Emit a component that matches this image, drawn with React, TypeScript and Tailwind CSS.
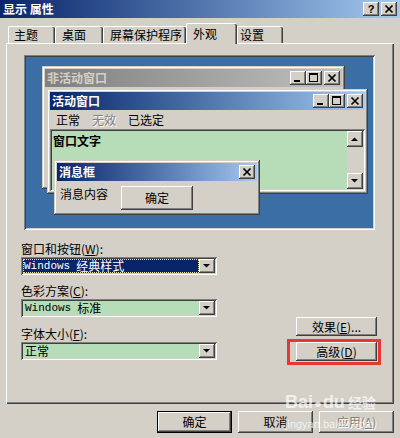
const raised =
    "shadow-[inset_-1px_-1px_#404040,inset_1px_1px_#ffffff,inset_-2px_-2px_#808080,inset_2px_2px_#d4d0c8]";
const sunken =
    "shadow-[inset_1px_1px_#808080,inset_-1px_-1px_#ffffff,inset_2px_2px_#404040,inset_-2px_-2px_#d4d0c8]";
const frame =
    "shadow-[inset_-1px_-1px_#404040,inset_1px_1px_#d4d0c8,inset_-2px_-2px_#808080,inset_2px_2px_#ffffff]";

function Glyph({ kind }: { kind: "min" | "max" | "close" | "up" | "down" }) {
    return (
        <svg width="16" height="14" viewBox="0 0 16 14">
            {kind === "min" && <rect x="4" y="9" width="6" height="2" fill="#000" />}
            {kind === "max" && (
                <>
                    <rect x="3.5" y="2.5" width="8" height="8" fill="none" stroke="#000" />
                    <rect x="3" y="2" width="9" height="2" fill="#000" />
                </>
            )}
            {kind === "close" && (
                <path d="M4.5 3.5l7 7M11.5 3.5l-7 7" stroke="#000" strokeWidth="1.7" />
            )}
            {kind === "up" && <path d="M4 9h7L7.5 5.5z" fill="#000" />}
            {kind === "down" && <path d="M4 5h7L7.5 8.5z" fill="#000" />}
        </svg>
    );
}

function CapBtn({ kind }: { kind: "min" | "max" | "close" }) {
    return (
        <div className={`w-[16px] h-[14px] bg-[#d4d0c8] ${raised} flex`}>
            <Glyph kind={kind} />
        </div>
    );
}

function Tab({
    label,
    w,
    pl,
    active,
}: {
    label: string;
    w: string;
    pl: string;
    active?: boolean;
}) {
    return (
        <div
            className={`${w} ${pl} ${
                active ? "h-[21px] -mb-[1px] z-10 pb-[1px]" : "h-[17px]"
            } relative flex items-center bg-[#d4d0c8] border-l border-t border-white rounded-tl-[2px] rounded-tr-[2px] shadow-[inset_-1px_0_#404040,inset_-2px_0_#808080]`}
        >
            {label}
        </div>
    );
}

function Combo({
    children,
    focused,
}: {
    children: React.ReactNode;
    focused?: boolean;
}) {
    return (
        <div className={`w-[196px] h-[18px] p-[2px] flex bg-[#b7dcb8] ${sunken}`}>
            {focused ? (
                <div className="flex-1 flex items-center pl-[1px] bg-[#0a246a] text-white outline-1 outline-dotted outline-[#e8e0a0] -outline-offset-1 whitespace-nowrap">
                    {children}
                </div>
            ) : (
                <div className="flex-1 flex items-center pl-[2px] whitespace-nowrap">
                    {children}
                </div>
            )}
            <div className={`w-[16px] h-[14px] bg-[#d4d0c8] ${raised} flex`}>
                <Glyph kind="down" />
            </div>
        </div>
    );
}

function Btn({
    children,
    className = "",
    isDefault,
    disabled,
}: {
    children: React.ReactNode;
    className?: string;
    isDefault?: boolean;
    disabled?: boolean;
}) {
    return (
        <div
            className={`${className} flex items-center justify-center bg-[#d4d0c8] ${
                isDefault ? "border border-black" : ""
            } ${raised} ${
                disabled ? "text-[#808080] [text-shadow:1px_1px_#ffffff]" : ""
            }`}
        >
            {children}
        </div>
    );
}

export default function App() {
    return (
        <div className="w-[400px] h-[438px] relative overflow-hidden bg-[#d4d0c8] text-black text-[12px] leading-[14px] font-['Noto_Sans_CJK_SC','Liberation_Sans',sans-serif]">
            {/* title bar */}
            <div className="h-[18px] flex items-center pl-[3px] pr-[3px] bg-linear-to-r from-[#0a246a] to-[#a6caf0]">
                <span className="text-white font-bold">显示 属性</span>
                <div className="ml-auto flex gap-[2px]">
                    <div className={`w-[16px] h-[14px] bg-[#d4d0c8] ${raised} flex items-center justify-center font-bold text-[11px] font-['Liberation_Sans',sans-serif]`}>
                        ?
                    </div>
                    <CapBtn kind="close" />
                </div>
            </div>

            {/* tabs */}
            <div className="mt-[5px] ml-[8px] flex items-end">
                <Tab label="主题" w="w-[47px]" pl="pl-[5px]" />
                <Tab label="桌面" w="w-[48px]" pl="pl-[6px]" />
                <Tab label="屏幕保护程序" w="w-[83px]" pl="pl-[6px]" />
                <Tab label="外观" w="w-[51px]" pl="pl-[6px]" active />
                <Tab label="设置" w="w-[46px]" pl="pl-[2px]" />
            </div>

            {/* panel */}
            <div className="ml-[6px] w-[388px] h-[361px] pt-[12px] flex flex-col shadow-[inset_1px_1px_#ffffff,inset_-1px_-1px_#404040,inset_-2px_-2px_#808080]">
                {/* preview */}
                <div className={`relative ml-[18px] w-[351px] h-[175px] bg-[#3a6ea5] ${sunken}`}>
                    {/* inactive window */}
                    <div className={`absolute left-[18px] top-[11px] w-[303px] h-[123px] p-[3px] bg-[#d4d0c8] ${frame}`}>
                        <div className="h-[18px] flex items-center pl-[2px] pr-[2px] bg-linear-to-r from-[#808080] to-[#c0c0c0]">
                            <span className="text-[#d4d0c8] font-bold">非活动窗口</span>
                            <div className="ml-auto flex">
                                <CapBtn kind="min" />
                                <CapBtn kind="max" />
                                <div className="ml-[2px]">
                                    <CapBtn kind="close" />
                                </div>
                            </div>
                        </div>
                    </div>

                    {/* active window */}
                    <div className={`absolute left-[23px] top-[34px] w-[321px] h-[105px] p-[3px] flex flex-col bg-[#d4d0c8] ${frame}`}>
                        <div className="h-[18px] flex items-center pl-[2px] pr-[2px] bg-linear-to-r from-[#0a246a] to-[#a6caf0]">
                            <span className="text-white font-bold">活动窗口</span>
                            <div className="ml-auto flex">
                                <CapBtn kind="min" />
                                <CapBtn kind="max" />
                                <div className="ml-[2px]">
                                    <CapBtn kind="close" />
                                </div>
                            </div>
                        </div>
                        <div className="h-[19px] flex items-center gap-[12px] pl-[6px]">
                            <span>正常</span>
                            <span className="text-[#808080] [text-shadow:1px_1px_#ffffff]">无效</span>
                            <span>已选定</span>
                        </div>
                        <div className={`flex-1 flex p-[2px] bg-[#b7dcb8] ${sunken}`}>
                            <div className="flex-1 pl-[1px] pt-[3px] font-bold">窗口文字</div>
                            <div className="w-[16px] flex flex-col bg-[#d4d0c8]">
                                <div className={`h-[16px] ${raised} flex items-center`}>
                                    <Glyph kind="up" />
                                </div>
                                <div className="flex-1" />
                                <div className={`h-[16px] ${raised} flex items-center`}>
                                    <Glyph kind="down" />
                                </div>
                            </div>
                        </div>
                    </div>

                    {/* message box */}
                    <div className={`absolute left-[30px] top-[105px] w-[206px] h-[55px] p-[3px] flex flex-col bg-[#d4d0c8] ${frame}`}>
                        <div className="h-[18px] flex items-center pl-[2px] pr-[2px] bg-linear-to-r from-[#0a246a] to-[#a6caf0]">
                            <span className="text-white font-bold">消息框</span>
                            <div className="ml-auto">
                                <CapBtn kind="close" />
                            </div>
                        </div>
                        <div className="flex items-start pl-[3px] pt-[5px]">
                            <span className="mt-[1px]">消息内容</span>
                            <Btn className="ml-[13px] w-[72px] h-[24px]">确定</Btn>
                        </div>
                    </div>
                </div>

                {/* lower controls */}
                <div className="flex ml-[15px] mt-[10px]">
                    <div className="w-[196px] flex flex-col">
                        <div className="h-[17px] leading-[17px]">
                            窗口和按钮(<u>W</u>):
                        </div>
                        <Combo focused>
                            <span className="font-['Liberation_Mono',monospace] text-[11px]">Windows</span>
                            <span className="ml-[6px]">经典样式</span>
                        </Combo>
                        <div className="h-[17px] leading-[17px] mt-[7px]">
                            色彩方案(<u>C</u>):
                        </div>
                        <Combo>
                            <span className="font-['Liberation_Mono',monospace] text-[11px]">Windows</span>
                            <span className="ml-[6px]">标准</span>
                        </Combo>
                        <div className="h-[17px] leading-[17px] mt-[8px]">
                            字体大小(<u>F</u>):
                        </div>
                        <Combo>正常</Combo>
                    </div>
                    <div className="ml-[70px] pt-[77px] flex flex-col items-start">
                        <Btn className="ml-[9px] w-[81px] h-[19px]">
                            效果(<u>E</u>)...
                        </Btn>
                        <div className="mt-[3px] w-[94px] h-[26px] border-[3px] border-[#e53935] pl-[6px]">
                            <Btn className="w-[81px] h-[19px]">
                                高级(<u>D</u>)
                            </Btn>
                        </div>
                    </div>
                </div>
            </div>

            {/* dialog buttons */}
            <div className="mt-[7px] pr-[6px] flex justify-end gap-[6px]">
                <Btn className="w-[75px] h-[22px]" isDefault>
                    确定
                </Btn>
                <Btn className="w-[75px] h-[22px]">取消</Btn>
                <Btn className="w-[75px] h-[22px]" disabled>
                    应用(<u>A</u>)
                </Btn>
            </div>

            {/* watermark */}
            <div className="absolute left-[285px] top-[392px] flex flex-col items-start text-white/70 pointer-events-none">
                <div className="flex items-baseline font-bold text-[18px] leading-[20px] font-['Liberation_Sans',sans-serif]">
                    <span>Bai</span>
                    <span className="text-[13px] mx-[1px]">●</span>
                    <span>du</span>
                    <span className="ml-[3px] text-[14px] font-['Noto_Sans_CJK_SC',sans-serif]">经验</span>
                </div>
                <div className="mt-[4px] text-[11px] leading-[12px] font-['Liberation_Sans',sans-serif]">
                    jingyan.baidu.com
                </div>
            </div>
        </div>
    );
}
